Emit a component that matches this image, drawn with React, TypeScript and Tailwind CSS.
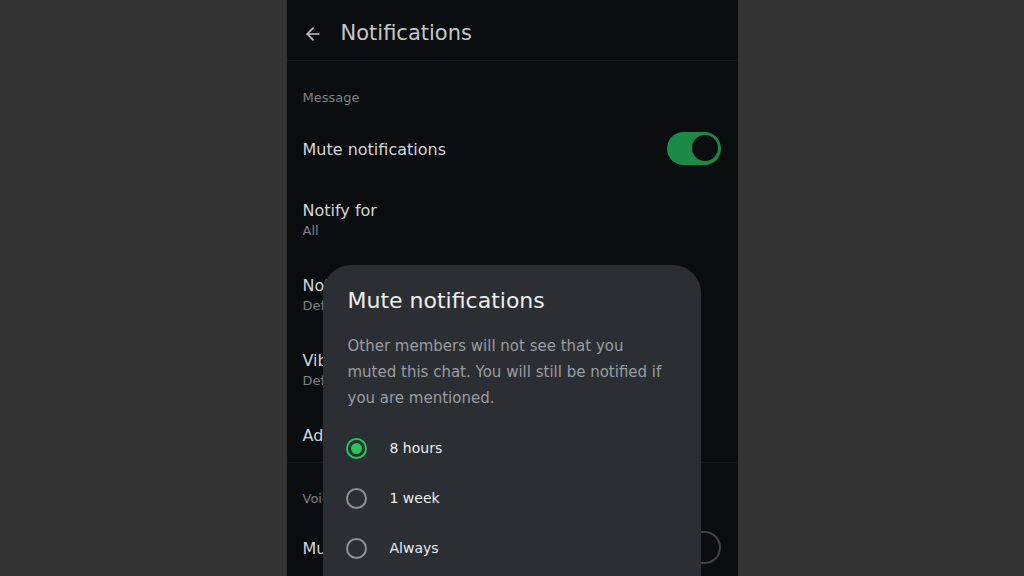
import React, { useState } from 'react';
import { ArrowLeft } from 'lucide-react';

const font = { fontFamily: '"DejaVu Sans", "Noto Sans", sans-serif' };

function Toggle({ on }: { on: boolean }) {
  return (
    <div
      className={`w-[54px] h-[33px] mt-[6px] rounded-full flex items-center px-[3px] ${
        on ? 'bg-[#1b8a46] justify-end' : 'border-2 border-[#3f4246] justify-start'
      }`}
    >
      <div className={`w-[26px] h-[26px] rounded-full ${on ? 'bg-[#0a0d10]' : 'bg-transparent'}`} />
    </div>
  );
}

function Row({ title, sub }: { title: string; sub?: string }) {
  return (
    <div className="h-[75px] flex flex-col justify-center px-4">
      <div className="text-[16px] text-[#d2d5d8] leading-[20px]">{title}</div>
      {sub && <div className="text-[13px] text-[#7d8084] leading-[20px]">{sub}</div>}
    </div>
  );
}

function SwitchRow({ title, on, className = '' }: { title: string; on: boolean; className?: string }) {
  return (
    <div className={`h-[76px] flex items-center justify-between pl-4 pr-[17px] ${className}`}>
      <span className="pt-[10px] text-[16px] text-[#d2d5d8]">{title}</span>
      <Toggle on={on} />
    </div>
  );
}

export default function App() {
  const [choice, setChoice] = useState('8 hours');
  const options = ['8 hours', '1 week', 'Always'];

  return (
    <div className="w-full h-[576px] bg-[#333333] flex justify-center overflow-hidden" style={font}>
      <div className="w-[451px] h-full bg-[#0a0d10] relative overflow-hidden">
        {/* app bar */}
        <div className="h-[61px] flex items-center px-4 pt-[7px] gap-[18px] border-b border-[#15181b]">
          <ArrowLeft className="w-[20px] h-[20px] text-[#c4c7ca]" strokeWidth={2} />
          <span className="text-[21px] text-[#c4c7ca]">Notifications</span>
        </div>

        <div className="px-4 pt-[27px] text-[13px] text-[#7d8084] leading-[20px]">Message</div>
        <SwitchRow title="Mute notifications" on className="-mt-[1px]" />
        <Row title="Notify for" sub="All" />
        <Row title="Notification tone" sub="Default" />
        <Row title="Vibrate" sub="Default" />
        <div className="h-[54px] flex items-center px-4 pt-[2px] text-[16px] text-[#d2d5d8]">Advanced</div>
        <div className="border-t border-[#15181b]" />
        <div className="px-4 pt-[26px] text-[13px] text-[#7d8084] leading-[20px]">Voice</div>
        <SwitchRow title="Mute notifications" on={false} className="-mt-[3px]" />

        {/* mute dialog */}
        <div className="absolute left-[36px] top-[265px] w-[378px] h-[340px] bg-[#2b2e32] rounded-[28px] px-[25px] pt-[22px]">
          <div className="text-[22px] text-[#eceef0] leading-[28px]">Mute notifications</div>
          <p className="mt-[18px] text-[15px] text-[#9a9da1] leading-[26px]">
            Other members will not see that you muted this chat. You will still be notified if you are mentioned.
          </p>
          <div className="mt-[12px] flex flex-col">
            {options.map(o => (
              <button
                key={o}
                onClick={() => setChoice(o)}
                className="h-[50px] flex items-center gap-[23px] -ml-[2px] text-left"
              >
                <span
                  className={`w-[21px] h-[21px] rounded-full border-2 flex items-center justify-center ${
                    choice === o ? 'border-[#22c55e]' : 'border-[#8e9195]'
                  }`}
                >
                  {choice === o && <span className="w-[11px] h-[11px] rounded-full bg-[#22c55e]" />}
                </span>
                <span className="text-[14px] text-[#eceef0]">{o}</span>
              </button>
            ))}
          </div>
        </div>
      </div>
    </div>
  );
}
